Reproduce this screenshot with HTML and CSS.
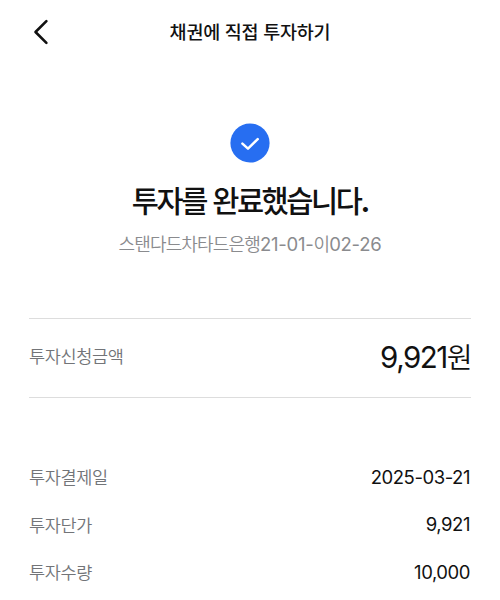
FILE: index.html
```html
<!DOCTYPE html>
<html lang="ko">
<head>
<meta charset="utf-8">
<title>채권에 직접 투자하기</title>
<link rel="stylesheet" href="styles.css">
</head>
<body>
<header class="topbar">
<svg class="back" viewBox="0 0 24 32" aria-hidden="true"><path d="M18.4 5.1 7.5 16 18.4 26.9"/></svg>
<h1 class="topbar-title">채권에 직접 투자하기</h1>
</header>
<main>
<section class="result">
<svg class="check" viewBox="0 0 40 40" aria-hidden="true"><circle cx="20" cy="20" r="19.6"/><path d="M12.4 20.6l5.6 5.1 9.7-9.5"/></svg>
<h2 class="headline">투자를 완료했습니다<span class="period">.</span></h2>
<p class="product">스탠다드차타드은행<span class="num">21-01-</span>이<span class="num">02-26</span></p>
</section>
<section class="amount"><span class="label">투자신청금액</span><span class="total">9,921<span class="unit">원</span></span></section>
<dl class="details">
<div class="row"><dt class="label">투자결제일</dt><dd>2025-03-21</dd></div>
<div class="row"><dt class="label">투자단가</dt><dd>9,921</dd></div>
<div class="row"><dt class="label">투자수량</dt><dd>10,000</dd></div>
</dl>
</main>
</body>
</html>
```
FILE: styles.css
```css
* { box-sizing: border-box; margin: 0; padding: 0; }
body { background: #fff; color: #111; font-family: Inter, "Noto Sans CJK KR", sans-serif; overflow: hidden; }
.topbar { height: 64px; display: grid; grid-template-columns: 100px 1fr 100px; align-items: center; }
.back { width: 24px; height: 32px; margin-left: 28px; fill: none; stroke: #111; stroke-width: 2.6; stroke-linecap: round; stroke-linejoin: round; }
.topbar-title { padding-bottom: 1px; text-align: center; font-size: 18.5px; line-height: 28px; font-weight: 500; letter-spacing: -.2px; white-space: nowrap; }
.result { height: 254px; padding-top: 59px; display: flex; flex-direction: column; align-items: center; }
.check { width: 40px; height: 40px; }
.check circle { fill: #276ef1; }
.check path { fill: none; stroke: #fff; stroke-width: 2.5; stroke-linecap: round; stroke-linejoin: round; }
.headline { margin-top: 16px; padding-left: 2px; font-size: 29.5px; line-height: 44px; font-weight: 500; letter-spacing: -2.45px; word-spacing: 1px; white-space: nowrap; }
.period { font-weight: 700; letter-spacing: 0; }
.product { margin-top: 7px; font-size: 18px; line-height: 28px; font-weight: 350; color: #8a8b8e; letter-spacing: -.85px; white-space: nowrap; }
.num { font-size: 18.5px; font-weight: 400; letter-spacing: -.25px; }
.amount { margin: 0 29px; height: 80px; padding-bottom: 5px; border: solid #ddd; border-width: 1px 0; display: flex; justify-content: space-between; align-items: center; }
.label { font-size: 17.5px; font-weight: 350; color: #727478; letter-spacing: -.35px; }
.total { font-size: 29.5px; letter-spacing: -1.5px; white-space: nowrap; margin-right: -1.5px; }
.unit { font-size: 28px; font-weight: 350; letter-spacing: 0; }
.details { margin: 55px 29px 0; }
.row { height: 47.5px; display: flex; justify-content: space-between; align-items: center; }
dd { font-size: 18.5px; letter-spacing: -.45px; padding-right: 1px; }
```
